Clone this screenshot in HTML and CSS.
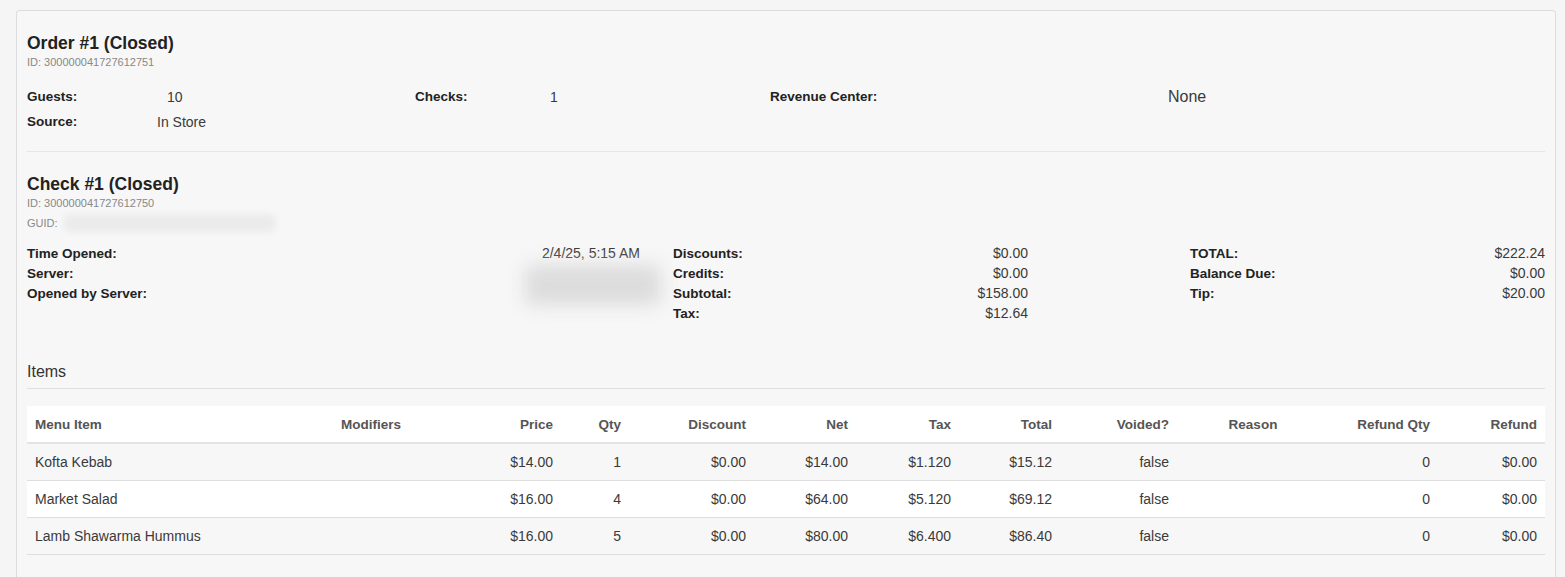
FILE: index.html
```html
<!DOCTYPE html>
<html lang="en">
<head>
    <meta charset="UTF-8">
    <title>Order #1</title>
    <link rel="stylesheet" href="styles.css">
</head>
<body>
    <!-- order card -->
    <div class="order-card">
        <h2 class="block-title">Order #1 (Closed)</h2>
        <div class="sub-id">ID: 300000041727612751</div>

        <div class="order-info">
            <div class="label">Guests:</div>
            <div class="value">10</div>
            <div class="label">Checks:</div>
            <div class="value">1</div>
            <div class="label">Revenue Center:</div>
            <div class="value big">None</div>

            <div class="label">Source:</div>
            <div class="value shift">In Store</div>
        </div>

        <hr class="divider">

        <!-- check -->
        <h2 class="block-title">Check #1 (Closed)</h2>
        <div class="sub-id">ID: 300000041727612750</div>
        <div class="sub-id guid">GUID: <span class="redacted guid-blur"></span></div>

        <div class="check-summary">
            <div class="summary-col col-1">
                <div class="sum-row"><span class="label">Time Opened:</span><span class="value">2/4/25, 5:15 AM</span></div>
                <div class="sum-row"><span class="label">Server:</span><span class="value"></span></div>
                <div class="sum-row"><span class="label">Opened by Server:</span><span class="value"></span></div>
                <span class="redacted server-blur"></span>
            </div>
            <div class="summary-col col-2">
                <div class="sum-row"><span class="label">Discounts:</span><span class="value">$0.00</span></div>
                <div class="sum-row"><span class="label">Credits:</span><span class="value">$0.00</span></div>
                <div class="sum-row"><span class="label">Subtotal:</span><span class="value">$158.00</span></div>
                <div class="sum-row"><span class="label">Tax:</span><span class="value">$12.64</span></div>
            </div>
            <div class="summary-col">
                <div class="sum-row"><span class="label">TOTAL:</span><span class="value">$222.24</span></div>
                <div class="sum-row"><span class="label">Balance Due:</span><span class="value">$0.00</span></div>
                <div class="sum-row"><span class="label">Tip:</span><span class="value">$20.00</span></div>
            </div>
        </div>

        <!-- items -->
        <h3 class="items-title">Items</h3>
        <table class="items-table">
            <colgroup>
                <col style="width:306px">
                <col style="width:137px">
                <col style="width:91px">
                <col style="width:68px">
                <col style="width:125px">
                <col style="width:102px">
                <col style="width:103px">
                <col style="width:101px">
                <col style="width:117px">
                <col style="width:152px">
                <col style="width:109px">
                <col style="width:107px">
            </colgroup>
            <thead>
                <tr>
                    <th>Menu Item</th>
                    <th>Modifiers</th>
                    <th class="num">Price</th>
                    <th class="num">Qty</th>
                    <th class="num">Discount</th>
                    <th class="num">Net</th>
                    <th class="num">Tax</th>
                    <th class="num">Total</th>
                    <th class="num">Voided?</th>
                    <th class="mid">Reason</th>
                    <th class="num">Refund Qty</th>
                    <th class="num">Refund</th>
                </tr>
            </thead>
            <tbody>
                <tr>
                    <td>Kofta Kebab</td>
                    <td></td>
                    <td class="num">$14.00</td>
                    <td class="num">1</td>
                    <td class="num">$0.00</td>
                    <td class="num">$14.00</td>
                    <td class="num">$1.120</td>
                    <td class="num">$15.12</td>
                    <td class="num">false</td>
                    <td></td>
                    <td class="num">0</td>
                    <td class="num">$0.00</td>
                </tr>
                <tr>
                    <td>Market Salad</td>
                    <td></td>
                    <td class="num">$16.00</td>
                    <td class="num">4</td>
                    <td class="num">$0.00</td>
                    <td class="num">$64.00</td>
                    <td class="num">$5.120</td>
                    <td class="num">$69.12</td>
                    <td class="num">false</td>
                    <td></td>
                    <td class="num">0</td>
                    <td class="num">$0.00</td>
                </tr>
                <tr>
                    <td>Lamb Shawarma Hummus</td>
                    <td></td>
                    <td class="num">$16.00</td>
                    <td class="num">5</td>
                    <td class="num">$0.00</td>
                    <td class="num">$80.00</td>
                    <td class="num">$6.400</td>
                    <td class="num">$86.40</td>
                    <td class="num">false</td>
                    <td></td>
                    <td class="num">0</td>
                    <td class="num">$0.00</td>
                </tr>
            </tbody>
        </table>
    </div>
</body>
</html>
```

FILE: styles.css
```css
/* page */
body {
    background-color: #f5f5f5;
    margin: 10px 9px 0 16px;
    font-family: "Liberation Sans", Arial, sans-serif;
    color: #333;
}

/* card */
.order-card {
    background-color: #f7f7f7;
    border: 1px solid #dcdcdc;
    border-bottom: none;
    border-radius: 4px 4px 0 0;
    padding: 22px 10px 30px;
}

.block-title {
    margin: 0;
    font-size: 17.5px;
    line-height: 20px;
    font-weight: bold;
    color: #222;
}

.sub-id {
    margin-top: 2px;
    font-size: 11px;
    line-height: 14px;
    color: #888;
}

.sub-id.guid {
    display: flex;
    align-items: center;
    height: 20px;
    margin-top: 3px;
}

.label {
    font-size: 13.5px;
    font-weight: bold;
    color: #222;
}

.value {
    font-size: 14px;
    color: #3a3a3a;
}

.value.big {
    font-size: 16px;
}

.value.shift {
    margin-left: -10px;
}

/* order info grid */
.order-info {
    display: grid;
    grid-template-columns: 140px 248px 135px 220px 398px 1fr;
    grid-auto-rows: 25px;
    align-items: center;
    margin-top: 15px;
}

.divider {
    border: none;
    border-top: 1px solid #e6e6e6;
    margin: 17px 0 22px;
}

/* check summary */
.check-summary {
    display: flex;
    margin-top: 10px;
}

.summary-col {
    position: relative;
    width: 355px;
}

.summary-col.col-1 {
    width: 613px;
    padding-right: 33px;
}

.summary-col.col-2 {
    padding-right: 162px;
}

.sum-row {
    display: flex;
    justify-content: space-between;
    align-items: center;
    height: 20px;
}

/* blurred values */
.redacted {
    display: inline-block;
    border-radius: 6px;
}

.guid-blur {
    width: 212px;
    height: 18px;
    margin-left: 6px;
    background-color: #ebebeb;
    filter: blur(3px);
}

.server-blur {
    position: absolute;
    left: 498px;
    top: 22px;
    width: 136px;
    height: 40px;
    background-color: #dcdcdc;
    filter: blur(9px);
}

/* items */
.items-title {
    margin: 39px 0 0;
    padding-bottom: 6px;
    border-bottom: 1px solid #e0e0e0;
    font-size: 16px;
    line-height: 20px;
    font-weight: normal;
    color: #333;
}

.items-table {
    margin-top: 17px;
    width: 100%;
    table-layout: fixed;
    border-collapse: collapse;
}

.items-table th {
    height: 36px;
    padding: 0 8px;
    background-color: #fff;
    border-bottom: 2px solid #e3e3e3;
    text-align: left;
    font-size: 13.5px;
    font-weight: bold;
    color: #555;
}

.items-table td {
    height: 36px;
    padding: 0 8px;
    border-bottom: 1px solid #dedede;
    font-size: 14px;
    color: #3a3a3a;
    white-space: nowrap;
}

.items-table tbody tr:nth-child(even) td {
    background-color: #fff;
}

.items-table .num {
    text-align: right;
}

.items-table .mid {
    text-align: center;
}
```
